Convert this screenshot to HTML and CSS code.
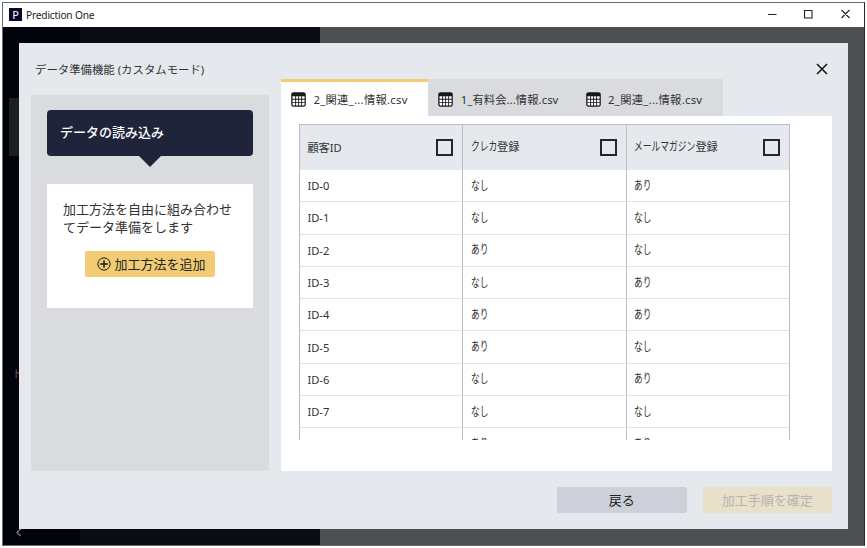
FILE: index.html
```html
<!DOCTYPE html>
<html lang="ja">
<head>
<meta charset="utf-8">
<title>Prediction One</title>
<link rel="stylesheet" href="styles.css">
</head>
<body>
<svg class="defs" width="0" height="0">
  <symbol id="table-icon" viewBox="0 0 15 15">
    <rect x="0.2" y="0.2" width="14.6" height="14.6" rx="2.4" fill="#17181c"/>
    <path fill="#fff" d="M1.5 4.3h2.7v2.5H1.5zM5.1 4.3h2.1v2.5H5.1zM8.1 4.3h2.1v2.5H8.1zM11.1 4.3h2.5v2.5h-2.5zM1.5 7.7h2.7v2.2H1.5zM5.1 7.7h2.1v2.2H5.1zM8.1 7.7h2.1v2.2H8.1zM11.1 7.7h2.5v2.2h-2.5zM1.5 10.8h2.7v2.7H2.3l-.8-.8zM5.1 10.8h2.1v2.7H5.1zM8.1 10.8h2.1v2.7H8.1zM11.1 10.8h2.5v1.9l-.8.8h-1.7z"/>
  </symbol>
</svg>
<div class="window">
  <header class="titlebar">
    <span class="logo">P</span>
    <span class="app-name">Prediction One</span>
    <svg class="controls" width="84" height="12" viewBox="0 0 84 12" fill="none" stroke="#222" stroke-width="1.1">
      <path d="M1 5.5h8.5M37.5 1.5h7.5v7.5h-7.5zM74.5 1l8 8M82.5 1l-8 8"/>
    </svg>
  </header>
  <div class="workspace">
    <nav class="rail">
      <div class="rail-active"></div>
      <span class="rail-label">ト</span>
      <svg class="rail-collapse" width="6" height="9" viewBox="0 0 6 9" fill="none" stroke="#888" stroke-width="1.2"><path d="M4.8.7 1 4.4l3.8 3.8"/></svg>
    </nav>
    <div class="subnav"></div>
    <div class="backdrop"></div>
    <section class="modal">
      <div class="modal-title"><span>データ準備機能 (カスタムモード)</span></div>
      <svg class="close" width="12" height="12" viewBox="0 0 12 12" fill="none" stroke="#111" stroke-width="1.5"><path d="M1 1l10 10M11 1L1 11"/></svg>
      <div class="content">
        <aside class="steps">
          <div class="step-head">データの読み込み</div>
          <div class="step-card">
            <p>加工方法を自由に組み合わせてデータ準備をします</p>
            <button class="add"><svg width="14" height="14" viewBox="0 0 14 14" fill="none" stroke="#1b1b1b"><circle cx="7" cy="7" r="6.1" stroke-width="1"/><path stroke-width="1.5" d="M7 3.2v7.6M3.2 7h7.6"/></svg><span>加工方法を追加</span></button>
          </div>
        </aside>
        <div class="data">
          <div class="tabs">
            <div class="tab active"><svg width="15" height="15"><use href="#table-icon"/></svg><span>2_関連_...情報.csv</span></div>
            <div class="tab snug"><svg width="15" height="15"><use href="#table-icon"/></svg><span>1_有料会...情報.csv</span></div>
            <div class="tab"><svg width="15" height="15"><use href="#table-icon"/></svg><span>2_関連_...情報.csv</span></div>
          </div>
          <div class="panel">
            <div class="table">
              <div class="row head">
                <div class="cell"><span>顧客ID</span><i class="check"></i></div>
                <div class="cell"><span><b class="kana k3">クレカ</b>登録</span><i class="check"></i></div>
                <div class="cell"><span><b class="kana k7">メールマガジン</b>登録</span><i class="check"></i></div>
              </div>
              <div class="row"><div class="cell">ID-0</div><div class="cell"><b class="kana">なし</b></div><div class="cell"><b class="kana">あり</b></div></div>
              <div class="row"><div class="cell">ID-1</div><div class="cell"><b class="kana">なし</b></div><div class="cell"><b class="kana">なし</b></div></div>
              <div class="row"><div class="cell">ID-2</div><div class="cell"><b class="kana">あり</b></div><div class="cell"><b class="kana">なし</b></div></div>
              <div class="row"><div class="cell">ID-3</div><div class="cell"><b class="kana">なし</b></div><div class="cell"><b class="kana">あり</b></div></div>
              <div class="row"><div class="cell">ID-4</div><div class="cell"><b class="kana">あり</b></div><div class="cell"><b class="kana">あり</b></div></div>
              <div class="row"><div class="cell">ID-5</div><div class="cell"><b class="kana">あり</b></div><div class="cell"><b class="kana">なし</b></div></div>
              <div class="row"><div class="cell">ID-6</div><div class="cell"><b class="kana">なし</b></div><div class="cell"><b class="kana">あり</b></div></div>
              <div class="row"><div class="cell">ID-7</div><div class="cell"><b class="kana">なし</b></div><div class="cell"><b class="kana">なし</b></div></div>
              <div class="row"><div class="cell"></div><div class="cell"><b class="kana">あり</b></div><div class="cell"><b class="kana">あり</b></div></div>
            </div>
          </div>
        </div>
      </div>
      <footer class="actions">
        <button class="back">戻る</button>
        <button class="confirm" disabled>加工手順を確定</button>
      </footer>
    </section>
  </div>
</div>
</body>
</html>
```
FILE: styles.css
```css
* { box-sizing: border-box; }
body {
  margin: 0;
  padding: 2px;
  width: 867px;
  height: 548px;
  overflow: hidden;
  background: #fff;
  color: #333;
  font-family: "Noto Sans", "Noto Sans CJK JP", sans-serif;
}
button { border: 0; padding: 0; font: inherit; color: inherit; }
.defs { position: absolute; }
.window {
  width: 863px;
  height: 544px;
  border: 1px solid #6b6c6e;
  border-right-color: #25272c;
  display: flex;
  flex-direction: column;
}
.titlebar {
  height: 24px;
  flex: none;
  display: flex;
  align-items: center;
  padding: 0 13px 1px 6px;
  background: #fff;
  font-size: 10.2px;
}
.logo {
  width: 13px;
  height: 13px;
  margin-right: 4px;
  background: #080a2b;
  color: #fff;
  font-size: 11px;
  line-height: 13px;
  text-align: center;
}
.app-name { letter-spacing: -.2px; font-size: 10.2px; color: #222; white-space: nowrap; }
.controls { margin-left: auto; }
.workspace { position: relative; flex: 1; display: flex; min-height: 0; }
.rail { width: 77px; background: #02040c; display: flex; flex-direction: column; }
.rail-active { height: 58px; margin: 71px 0 0 6px; background: #1d1e22; }
.rail-label { margin: 212px 0 0 9px; font-size: 11px; line-height: 12px; color: #775950; }
.rail-collapse { margin: 148px 0 0 13px; }
.subnav { width: 240px; background: #090c13; }
.backdrop { flex: 1; background: #4e4f51; }
.modal {
  position: absolute;
  left: 16px;
  top: 16px;
  width: 829px;
  height: 486px;
  padding: 0 16px 0 12px;
  background: #e5e8ed;
}
.modal-title { height: 36px; padding: 18px 0 0 4px; font-size: 11.4px; line-height: 17px; white-space: nowrap; }
.close { position: absolute; left: 797px; top: 20px; }
.content { display: flex; gap: 12px; height: 392px; }
.steps { width: 238px; height: 376px; margin-top: 16px; padding: 15px 16px 0; background: #dadbdf; }
.step-head {
  position: relative;
  height: 46px;
  padding-left: 13px;
  border-radius: 4px;
  background: #20243a;
  color: #fff;
  font-size: 13px;
  font-weight: 500;
  line-height: 45px;
}
.step-head::after {
  content: "";
  position: absolute;
  left: 91px;
  top: 45px;
  border: 12px solid transparent;
  border-top-color: #20243a;
  border-bottom: 0;
}
.step-card { height: 124px; margin-top: 28px; padding: 16px 16px 0; background: #fff; text-align: center; }
.step-card p { margin: 0 0 15px; width: 171px; font-size: 13px; line-height: 18px; text-align: left; }
.add {
  display: inline-flex;
  align-items: center;
  justify-content: center;
  gap: 3px;
  width: 130px;
  height: 26px;
  padding-left: 3px;
  border-radius: 2px;
  background: #f2cc75;
  color: #262626;
  font-size: 13px;
}
.add span { padding-bottom: 2px; }
.data { width: 551px; }
.tabs { display: flex; width: 442px; height: 37px; background: #dadbdf; }
.tab { width: 147.3px; display: flex; align-items: center; gap: 7.5px; padding: 3px 0 0 10px; font-size: 11.3px; letter-spacing: .28px; white-space: nowrap; }
.tab span { padding-bottom: 1px; }
.tab.snug { letter-spacing: .07px; }
.tab.active { padding-top: 0; border-top: 3px solid #f2cc75; background: #fff; }
.panel { height: 355px; padding: 8px 0 0 18px; background: #fff; }
.table {
  width: 491px;
  height: 316px;
  overflow: hidden;
  border: 1px solid #babec6;
  border-bottom: 0;
  font-size: 11.2px;
}
.row { display: grid; grid-template-columns: 163.4px 163.3px 1fr; height: 32.3px; }
.row.head { height: 45px; background: #e5e8ed; }
.cell {
  display: flex;
  align-items: center;
  justify-content: space-between;
  padding: 0 9px 0 7.4px;
  border-right: 1px solid #babec6;
  border-bottom: 1px solid #e0e2e6;
  white-space: nowrap;
}
.cell:last-child { border-right: 0; }
.head .cell { border-bottom: 0; }
.head span { padding-bottom: 2px; }
.check { width: 17px; height: 17px; border: 2px solid #24262b; }
.kana {
  display: inline-block;
  width: 17.5px;
  font-size: 12.4px;
  font-weight: 400;
  line-height: 16px;
  transform: scaleX(.705);
  transform-origin: left;
}
.k3 { width: 26.2px; }
.k7 { width: 61.3px; }
.actions { display: flex; justify-content: flex-end; gap: 16px; margin-top: 16px; font-size: 13px; }
.actions button { width: 129.5px; height: 26px; padding-bottom: 2px; border-radius: 2px; }
.back { background: #cdd0d9; color: #222; }
.confirm { background: #e9e0c9; color: #b5b4b1; }
```
